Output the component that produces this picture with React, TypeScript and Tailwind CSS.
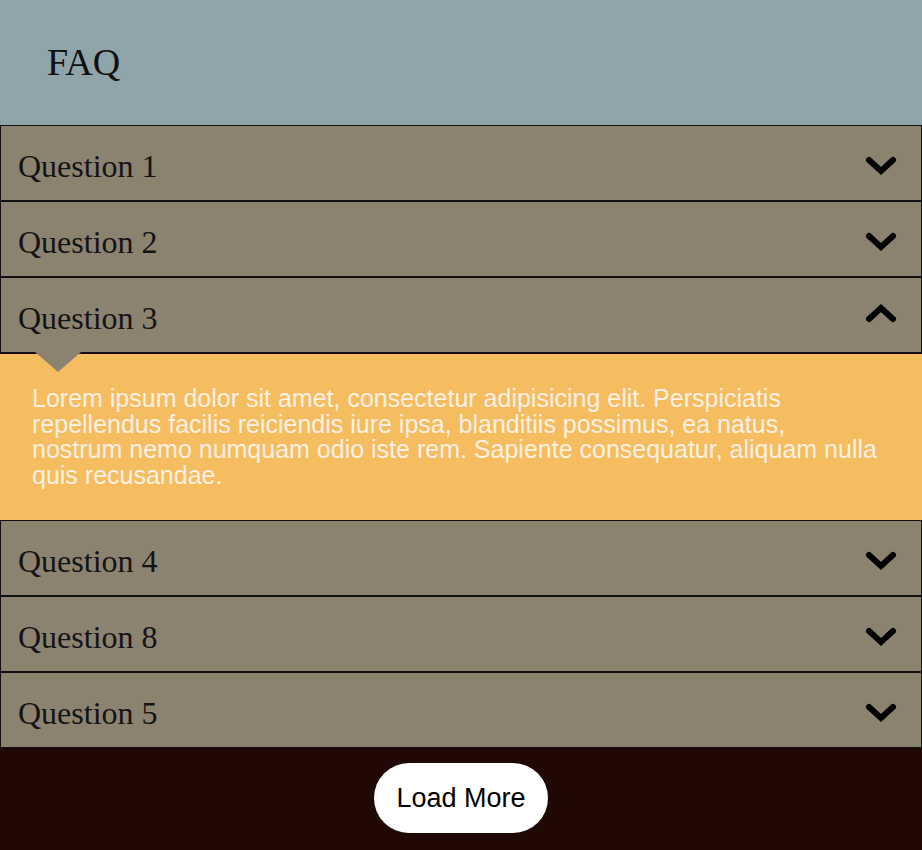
import React from "react";

const Chevron = ({ up }: { up?: boolean }) => (
  <svg width="34" height="22" viewBox="0 0 34 22" className="shrink-0">
    <polyline
      points={up ? "5,17 17,6 29,17" : "5,5 17,16 29,5"}
      fill="none"
      stroke="#000"
      strokeWidth="6"
      strokeLinecap="round"
      strokeLinejoin="miter"
    />
  </svg>
);

const Row = ({ label, open }: { label: string; open?: boolean }) => (
  <div className="flex h-[76px] items-center justify-between border border-[#111] bg-[#8b8370] pl-[17px] pr-[23px]">
    <span className="pt-[5px] text-[32px] leading-none text-[#141414]" style={{ fontFamily: '"Liberation Serif", "Times New Roman", serif' }}>
      {label}
    </span>
    <div className={open ? "-mt-[4px]" : "mt-[6px]"}>
      <Chevron up={open} />
    </div>
  </div>
);

export default function App() {
  return (
    <div className="w-[922px] min-h-[850px] bg-[#200805]">
      <div className="flex h-[125px] items-center bg-[#90a5aa] pl-[47px]">
        <h1 className="text-[38px] font-normal text-[#111]" style={{ fontFamily: '"Liberation Serif", "Times New Roman", serif' }}>
          FAQ
        </h1>
      </div>
      <Row label="Question 1" />
      <Row label="Question 2" />
      <Row label="Question 3" open />
      <div className="relative mt-px bg-[#f5bd5f] pl-8 pr-[42px] pt-8 pb-[32px]">
        <div className="absolute -top-[2px] left-[35px] h-0 w-0 border-l-[23px] border-r-[23px] border-t-[20px] border-l-transparent border-r-transparent border-t-[#8b8370]" />
        <p className="text-[25px] text-[#fcf0e4]" style={{ fontFamily: '"Liberation Sans", Arial, sans-serif', lineHeight: "25.5px" }}>
          Lorem ipsum dolor sit amet, consectetur adipisicing elit. Perspiciatis repellendus facilis reiciendis iure ipsa, blanditiis possimus, ea natus, nostrum nemo numquam odio iste rem. Sapiente consequatur, aliquam nulla quis recusandae.
        </p>
      </div>
      <Row label="Question 4" />
      <Row label="Question 8" />
      <Row label="Question 5" />
      <div className="flex justify-center pt-[15px] pb-[20px]">
        <button
          className="flex h-[70px] w-[174px] items-center justify-center rounded-full bg-white text-[27px] text-black"
          style={{ fontFamily: '"Liberation Sans", Arial, sans-serif' }}
        >
          Load More
        </button>
      </div>
    </div>
  );
}
